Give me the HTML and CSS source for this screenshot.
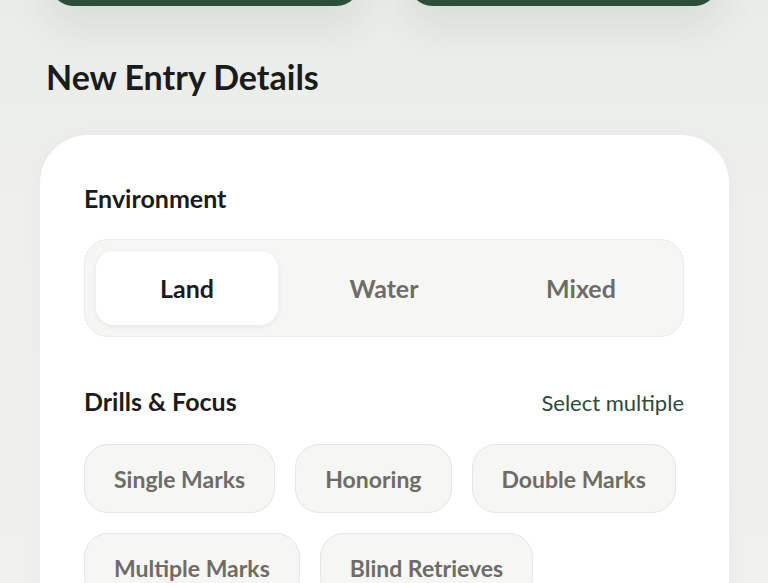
FILE: index.html
```html
<!DOCTYPE html>
<html lang="en">
<head>
<meta charset="utf-8">
<title>New Entry Details</title>
<link rel="stylesheet" href="styles.css">
</head>
<body>
<div class="page">
  <div class="top-actions">
    <div class="top-btn"></div>
    <div class="top-btn"></div>
  </div>
  <h1 class="title">New Entry Details</h1>
  <section class="card">
    <h2 class="label">Environment</h2>
    <div class="segmented">
      <div class="seg seg-active">Land</div>
      <div class="seg">Water</div>
      <div class="seg">Mixed</div>
    </div>
    <div class="section-head">
      <h2 class="label">Drills &amp; Focus</h2>
      <span class="hint">Select multiple</span>
    </div>
    <div class="chips">
      <div class="chip">Single Marks</div>
      <div class="chip">Honoring</div>
      <div class="chip">Double Marks</div>
      <div class="chip">Multiple Marks</div>
      <div class="chip">Blind Retrieves</div>
    </div>
  </section>
</div>
</body>
</html>
```

FILE: styles.css
```css
html, body {
  margin: 0;
  padding: 0;
}
body {
  background: linear-gradient(180deg, #e9ece8 0%, #eff0ec 40%, #f0f0ed 100%);
  font-family: "Lato", "Inter", sans-serif;
  color: #1b1b1b;
  height: 583px;
  overflow: hidden;
}
.page {
  padding: 0 39px 0 40px;
}
.top-actions {
  display: flex;
  gap: 51px;
  padding: 0 12px 0 11px;
}
.top-btn {
  flex: 1;
  height: 60px;
  margin-top: -54px;
  background: #2c4f3c;
  border-radius: 0 0 22px 22px;
  box-shadow: 0 18px 40px rgba(44, 79, 60, 0.10);
}
.title {
  margin: 51px 0 0 6px;
  font-size: 34px;
  font-weight: 700;
  line-height: 40px;
}
.card {
  margin-top: 38px;
  background: #ffffff;
  border-radius: 48px;
  padding: 48px 45px 40px 44px;
  height: 520px;
  box-shadow: 0 4px 24px rgba(0, 0, 0, 0.03);
}
.label {
  margin: 0;
  font-size: 25px;
  font-weight: 700;
  line-height: 30px;
}
.segmented {
  margin-top: 26px;
  display: flex;
  gap: 15px;
  padding: 11px;
  background: #f6f6f4;
  border: 1px solid #ececea;
  border-radius: 24px;
}
.seg {
  flex: 1;
  height: 74px;
  display: flex;
  align-items: center;
  justify-content: center;
  font-size: 25px;
  font-weight: 700;
  color: #6f6b67;
  border-radius: 18px;
}
.seg-active {
  background: #ffffff;
  color: #1b1b1b;
  box-shadow: 0 2px 6px rgba(0, 0, 0, 0.06);
}
.section-head {
  margin-top: 49px;
  display: flex;
  justify-content: space-between;
  align-items: baseline;
}
.hint {
  font-size: 22px;
  color: #2e4a3a;
}
.chips {
  margin-top: 28px;
  display: flex;
  flex-wrap: wrap;
  gap: 20px 20px;
}
.chip {
  height: 67px;
  display: flex;
  align-items: center;
  padding: 0 29px;
  background: #f6f6f4;
  border: 1px solid #e6e6e3;
  border-radius: 24px;
  font-size: 23px;
  font-weight: 700;
  color: #6f6b67;
}
```
